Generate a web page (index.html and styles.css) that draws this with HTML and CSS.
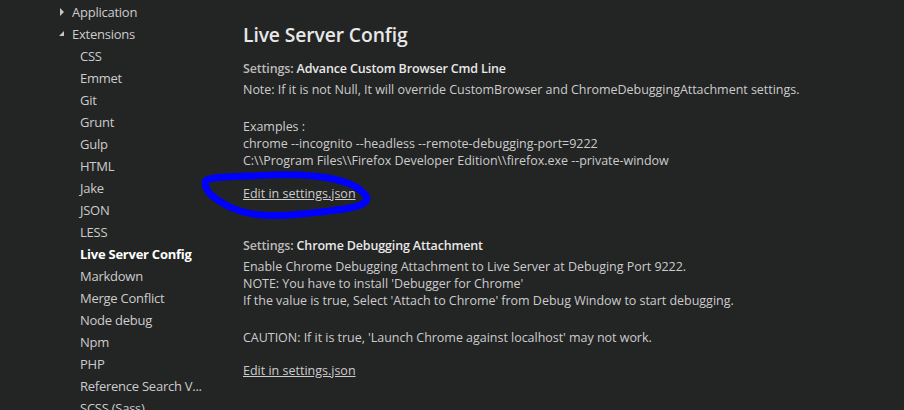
FILE: index.html
```html
<!DOCTYPE html>
<html>
<head>
<meta charset="utf-8">
<link rel="stylesheet" href="styles.css">
</head>
<body>
<div class="page">
  <nav class="tree">
    <div class="row group"><span class="arrow closed"></span>Application</div>
    <div class="row group"><span class="arrow open"></span>Extensions</div>
    <div class="row child">CSS</div>
    <div class="row child">Emmet</div>
    <div class="row child">Git</div>
    <div class="row child">Grunt</div>
    <div class="row child">Gulp</div>
    <div class="row child">HTML</div>
    <div class="row child">Jake</div>
    <div class="row child">JSON</div>
    <div class="row child">LESS</div>
    <div class="row child active">Live Server Config</div>
    <div class="row child">Markdown</div>
    <div class="row child">Merge Conflict</div>
    <div class="row child">Node debug</div>
    <div class="row child">Npm</div>
    <div class="row child">PHP</div>
    <div class="row child">Reference Search V...</div>
    <div class="row child">SCSS (Sass)</div>
  </nav>
  <main class="content">
    <h1 class="title">Live Server Config</h1>
    <section class="setting">
      <div class="label">Settings: <b>Advance Custom Browser Cmd Line</b></div>
      <p class="desc">Note: If it is not Null, It will override CustomBrowser and ChromeDebuggingAttachment settings.</p>
      <p class="desc">Examples :<br>chrome --incognito --headless --remote-debugging-port=9222<br>C:\\Program Files\\Firefox Developer Edition\\firefox.exe --private-window</p>
      <a class="edit">Edit in settings.json</a>
    </section>
    <section class="setting">
      <div class="label">Settings: <b>Chrome Debugging Attachment</b></div>
      <p class="desc">Enable Chrome Debugging Attachment to Live Server at Debuging Port 9222.<br>NOTE: You have to install 'Debugger for Chrome'<br>If the value is true, Select 'Attach to Chrome' from Debug Window to start debugging.</p>
      <p class="desc">CAUTION: If it is true, 'Launch Chrome against localhost' may not work.</p>
      <a class="edit">Edit in settings.json</a>
    </section>
  </main>
  <svg class="scribble" width="904" height="410" viewBox="0 0 904 410">
    <path d="M205 183 C204 176 232 177 272 175 C322 173 356 181 366 196 C372 207 342 210 302 214 C262 218 242 214 226 205 C211 197 205 190 205 183 Z" fill="none" stroke="#0000ff" stroke-width="7" stroke-linejoin="round"/>
  </svg>
</div>
</body>
</html>
```
FILE: styles.css
```css
html, body {
  margin: 0;
  padding: 0;
  background: #232424;
}
body {
  width: 904px;
  height: 410px;
  overflow: hidden;
  font-family: "Segoe UI", "Open Sans", "Noto Sans", sans-serif;
  font-size: 13px;
  color: #cccccc;
}
.page {
  position: relative;
  display: flex;
  width: 904px;
  height: 410px;
}
.tree {
  width: 243px;
  flex: none;
  padding-top: 1px;
}
.row {
  height: 22px;
  line-height: 22px;
  white-space: nowrap;
  color: #cccccc;
  letter-spacing: -0.25px;
}
.group {
  padding-left: 58px;
  display: flex;
  align-items: center;
}
.arrow {
  width: 14px;
  height: 22px;
  display: inline-block;
  position: relative;
}
.arrow.closed::before {
  content: "";
  position: absolute;
  left: 2px;
  top: 7px;
  border-left: 4px solid #c5c5c5;
  border-top: 4px solid transparent;
  border-bottom: 4px solid transparent;
}
.arrow.open::before {
  content: "";
  position: absolute;
  left: 1px;
  top: 8px;
  width: 0;
  height: 0;
  border-right: 5px solid #c5c5c5;
  border-top: 5px solid transparent;
}
.child {
  padding-left: 80px;
}
.active {
  font-weight: 700;
  color: #ffffff;
}
.content {
  flex: 1;
  padding-top: 21px;
}
.title {
  margin: 0 0 11px;
  font-size: 19.3px;
  font-weight: 600;
  line-height: 28px;
  color: #e8e8e8;
  letter-spacing: -0.1px;
}
.setting {
  margin-bottom: 35px;
}
.label {
  font-size: 12.5px;
  line-height: 17px;
  color: #bbbbbb;
  font-weight: 600;
  margin-bottom: 4px;
  letter-spacing: -0.15px;
}
.label b {
  color: #e8e8e8;
  font-weight: 600;
}
.desc {
  margin: 0 0 20px;
  font-size: 12.5px;
  line-height: 17px;
  color: #cccccc;
  letter-spacing: -0.03px;
}
.edit {
  display: block;
  width: max-content;
  font-size: 12.5px;
  line-height: 17px;
  color: #cccccc;
  text-decoration: underline;
  margin-top: -4px;
}
.scribble {
  position: absolute;
  left: 0;
  top: 0;
  pointer-events: none;
}
```
